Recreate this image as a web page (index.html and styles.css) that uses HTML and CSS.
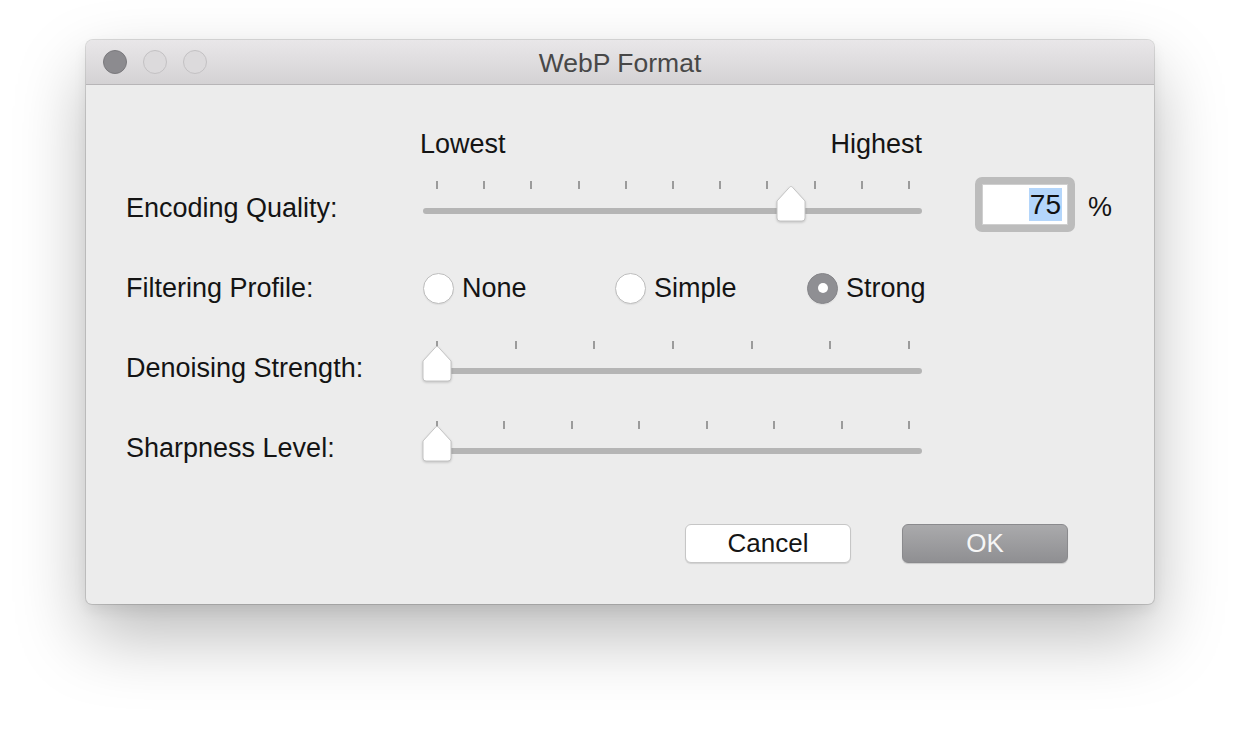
FILE: index.html
```html
<!DOCTYPE html>
<html lang="en">
<head>
<meta charset="utf-8">
<title>WebP Format</title>
<link rel="stylesheet" href="styles.css">
</head>
<body>
<div class="window">
  <div class="titlebar">
    <div class="lights">
      <span class="light light-close"></span>
      <span class="light"></span>
      <span class="light"></span>
    </div>
    <div class="title">WebP Format</div>
  </div>
  <div class="content">
    <div class="row header-row">
      <div class="label"></div>
      <div class="scale-labels"><span>Lowest</span><span>Highest</span></div>
    </div>

    <div class="row">
      <div class="label">Encoding Quality:</div>
      <div class="slider">
        <div class="ticks">
          <i></i><i></i><i></i><i></i><i></i><i></i><i></i><i></i><i></i><i></i><i></i>
        </div>
        <div class="track"></div>
        <svg class="thumb" style="--v:0.75" width="32" height="38" viewBox="0 0 32 38"><path d="M16 1.5 Q16.8 1.5 17.5 2.3 L30 16 L30 33 Q30 36 27 36 L5 36 Q2 36 2 33 L2 16 L14.5 2.3 Q15.2 1.5 16 1.5 Z"/></svg>
      </div>
      <div class="field-ring">
        <div class="field"><span class="sel">75</span></div>
      </div>
      <div class="unit">%</div>
    </div>

    <div class="row">
      <div class="label">Filtering Profile:</div>
      <div class="radios">
        <label class="radio"><span class="dot"></span>None</label>
        <label class="radio"><span class="dot"></span>Simple</label>
        <label class="radio"><span class="dot on"></span>Strong</label>
      </div>
    </div>

    <div class="row">
      <div class="label">Denoising Strength:</div>
      <div class="slider">
        <div class="ticks">
          <i></i><i></i><i></i><i></i><i></i><i></i><i></i>
        </div>
        <div class="track"></div>
        <svg class="thumb" style="--v:0" width="32" height="38" viewBox="0 0 32 38"><path d="M16 1.5 Q16.8 1.5 17.5 2.3 L30 16 L30 33 Q30 36 27 36 L5 36 Q2 36 2 33 L2 16 L14.5 2.3 Q15.2 1.5 16 1.5 Z"/></svg>
      </div>
    </div>

    <div class="row">
      <div class="label">Sharpness Level:</div>
      <div class="slider">
        <div class="ticks">
          <i></i><i></i><i></i><i></i><i></i><i></i><i></i><i></i>
        </div>
        <div class="track"></div>
        <svg class="thumb" style="--v:0" width="32" height="38" viewBox="0 0 32 38"><path d="M16 1.5 Q16.8 1.5 17.5 2.3 L30 16 L30 33 Q30 36 27 36 L5 36 Q2 36 2 33 L2 16 L14.5 2.3 Q15.2 1.5 16 1.5 Z"/></svg>
      </div>
    </div>

    <div class="buttons">
      <button class="btn btn-cancel">Cancel</button>
      <button class="btn btn-ok">OK</button>
    </div>
  </div>
</div>
</body>
</html>
```

FILE: styles.css
```css
html, body {
  margin: 0;
  padding: 0;
  background: #ffffff;
}
html {
  height: 100%;
}
body {
  min-height: 100%;
  box-sizing: border-box;
  padding: 40px 0 0 86px;
  font-family: "Liberation Sans", Arial, sans-serif;
  color: #141414;
}
.window {
  width: 1068px;
  background: #ececec;
  border-radius: 7px 7px 6px 6px;
  box-shadow: 0 0 0 1px rgba(0,0,0,0.13), 0 32px 70px rgba(0,0,0,0.27), 0 6px 14px rgba(0,0,0,0.07);
  overflow: hidden;
}
.titlebar {
  position: relative;
  height: 44px;
  background: linear-gradient(#e9e7e9, #d4d2d4);
  border-bottom: 1px solid #b7b5b7;
  display: flex;
  align-items: center;
  justify-content: center;
}
.lights {
  position: absolute;
  left: 17px;
  top: 10px;
  display: flex;
  gap: 16px;
}
.light {
  width: 22px;
  height: 22px;
  border-radius: 50%;
  background: #dcdadc;
  border: 1px solid #c3c1c3;
}
.light-close {
  background: #8c8b8f;
  border-color: #7a797d;
}
.title {
  font-size: 26.5px;
  color: #484848;
  padding-top: 2px;
}
.content {
  padding: 39px 86px 41px 40px;
}
.row {
  display: flex;
  align-items: center;
  height: 80px;
}
.header-row {
  height: 44px;
  align-items: flex-start;
  padding-top: 5px;
  box-sizing: border-box;
}
.label {
  width: 297px;
  flex: none;
  font-size: 27px;
}
.scale-labels {
  width: 502px;
  margin-left: -3px;
  display: flex;
  justify-content: space-between;
  font-size: 27px;
}
.slider {
  position: relative;
  width: 499px;
  height: 54px;
  flex: none;
}
.ticks {
  display: flex;
  justify-content: space-between;
  padding: 0 12px 0 13px;
}
.ticks i {
  display: block;
  width: 2px;
  height: 8px;
  background: #9b9b9b;
}
.track {
  position: absolute;
  left: 0;
  right: 0;
  top: 27px;
  height: 6px;
  border-radius: 3px;
  background: #b5b5b5;
}
.thumb {
  position: absolute;
  top: 4px;
  left: calc(14px + var(--v) * 472px - 16px);
  overflow: visible;
  filter: drop-shadow(0 1px 1px rgba(0,0,0,0.18));
}
.thumb path {
  fill: #ffffff;
  stroke: #c4c4c4;
  stroke-width: 1;
}
.field-ring {
  margin-left: 53px;
  margin-top: -7px;
  width: 100px;
  height: 55px;
  box-sizing: border-box;
  padding: 7px;
  border-radius: 7px;
  background: #bcbcbc;
  flex: none;
}
.field {
  height: 41px;
  box-sizing: border-box;
  background: #ffffff;
  border: 1px solid #cfcfcf;
  display: flex;
  align-items: center;
  justify-content: flex-end;
  padding-right: 5px;
  font-size: 28px;
  color: #111;
}
.sel {
  background: #b4d6fb;
  line-height: 33px;
  padding: 0 1px;
}
.unit {
  margin-left: 13px;
  margin-top: -1px;
  font-size: 27px;
}
.radios {
  display: flex;
}
.radio {
  width: 192px;
  display: flex;
  align-items: center;
  gap: 8px;
  font-size: 27px;
}
.dot {
  width: 29px;
  height: 29px;
  border-radius: 50%;
  background: #ffffff;
  border: 1px solid #bdbdbd;
  box-shadow: 0 1px 1px rgba(0,0,0,0.06);
  display: flex;
  align-items: center;
  justify-content: center;
}
.dot.on {
  background: #8f8f93;
  border-color: #86868a;
}
.dot.on::after {
  content: "";
  width: 10px;
  height: 10px;
  border-radius: 50%;
  background: #ffffff;
}
.buttons {
  display: flex;
  justify-content: flex-end;
  gap: 51px;
  margin-top: 36px;
}
.btn {
  width: 166px;
  height: 39px;
  border-radius: 6px;
  font-family: "Liberation Sans", Arial, sans-serif;
  font-size: 26px;
  padding: 0;
}
.btn-cancel {
  background: #ffffff;
  border: 1px solid #c6c6c6;
  box-shadow: 0 1px 1px rgba(0,0,0,0.12);
  color: #151515;
}
.btn-ok {
  background: linear-gradient(#aaaaac, #8f8f92);
  border: 1px solid #8a8a8d;
  box-shadow: 0 1px 1px rgba(0,0,0,0.15);
  color: #f6f6f6;
}
```
